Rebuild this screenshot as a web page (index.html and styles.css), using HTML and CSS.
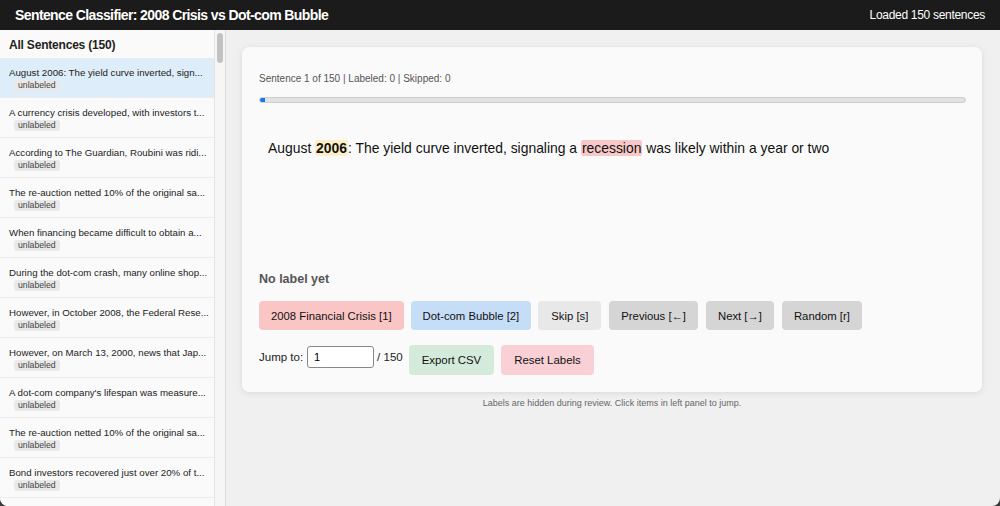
FILE: index.html
```html
<!DOCTYPE html>
<html lang="en">
<head>
    <meta charset="UTF-8">
    <meta name="viewport" content="width=device-width, initial-scale=1.0">
    <title>Sentence Classifier</title>
    <link rel="stylesheet" href="styles.css">
</head>
<body>
    <div class="app">
        <header class="topbar">
            <h1>Sentence Classifier: 2008 Crisis vs Dot-com Bubble</h1>
            <span id="status">Loaded 150 sentences</span>
        </header>

        <div class="layout">
            <aside class="sidebar">
                <div class="sidebar-scroll">
                    <div class="sidebar-title">All Sentences (150)</div>
                    <ul id="sentenceList" class="sentence-list"></ul>
                </div>
                <div class="scroll-track"><div class="scroll-thumb"></div></div>
            </aside>

            <main class="main">
                <div class="card">
                    <div class="stats">Sentence 1 of 150 | Labeled: 0 | Skipped: 0</div>
                    <div class="progress"><div class="progress-fill" style="width: 0.67%"></div></div>

                    <div class="sentence">
                        August <span class="hl-year">2006</span>: The yield curve inverted, signaling a <span class="hl-word">recession</span> was likely within a year or two
                    </div>

                    <div class="current-label">No label yet</div>

                    <div class="btn-row">
                        <button class="btn btn-crisis">2008 Financial Crisis [1]</button>
                        <button class="btn btn-dotcom">Dot-com Bubble [2]</button>
                        <button class="btn btn-skip">Skip [s]</button>
                        <button class="btn btn-nav">Previous [&larr;]</button>
                        <button class="btn btn-nav">Next [&rarr;]</button>
                        <button class="btn btn-nav">Random [r]</button>
                    </div>

                    <div class="btn-row tools">
                        <label for="jump">Jump to:</label>
                        <input type="text" id="jump" value="1">
                        <span class="total">/ 150</span>
                        <button class="btn btn-export">Export CSV</button>
                        <button class="btn btn-reset">Reset Labels</button>
                    </div>
                </div>
                <p class="hint">Labels are hidden during review. Click items in left panel to jump.</p>
            </main>
        </div>
    </div>

    <script src="app.js"></script>
</body>
</html>
```

FILE: styles.css
```css
* {
    box-sizing: border-box;
}

html, body {
    height: 100%;
}

body {
    margin: 0;
    font-family: "Liberation Sans", Arial, sans-serif;
    color: #222;
    background-color: #3a3a3a;
}

.app {
    height: 100%;
    display: flex;
    flex-direction: column;
    background-color: #f0f0f0;
    border-radius: 0 0 8px 8px;
    overflow: hidden;
}

.topbar {
    height: 30px;
    flex-shrink: 0;
    background-color: #1b1b1b;
    color: #fff;
    display: flex;
    align-items: center;
    justify-content: space-between;
    padding: 0 15px 0 15px;
}

.topbar h1 {
    margin: 0;
    font-size: 14px;
    letter-spacing: -0.6px;
    font-weight: bold;
}

#status {
    font-size: 12px;
    letter-spacing: -0.3px;
}

.layout {
    flex: 1;
    display: flex;
    min-height: 0;
}

.sidebar {
    width: 226px;
    flex-shrink: 0;
    display: flex;
    background-color: #fafafa;
    border-right: 1px solid #dcdcdc;
}

.sidebar-scroll {
    flex: 1;
    overflow-y: auto;
    scrollbar-width: none;
}

.sidebar-scroll::-webkit-scrollbar {
    display: none;
}

.scroll-track {
    width: 11px;
    flex-shrink: 0;
    background-color: #f6f6f6;
    border-left: 1px solid #e4e4e4;
    padding: 3px 2px 0 2px;
}

.scroll-thumb {
    height: 30px;
    background-color: #c2c2c2;
    border-radius: 3px;
}

.sidebar-title {
    font-size: 12px;
    letter-spacing: -0.2px;
    font-weight: bold;
    padding: 8px 9px 7px;
    height: 28px;
}

.sentence-list {
    list-style: none;
    margin: 0;
    padding: 0;
}

.sentence-list li {
    height: 40px;
    padding: 9px 9px 0;
    border-bottom: 1px solid #ececec;
    font-size: 9.7px;
    line-height: 12px;
    color: #222;
    cursor: pointer;
    white-space: nowrap;
    overflow: hidden;
}

.sentence-list li.active {
    background-color: #ddedf9;
}

.badge {
    display: block;
    width: fit-content;
    margin: 1px 0 0 5px;
    padding: 0 4px;
    height: 11px;
    line-height: 11px;
    font-size: 8.7px;
    color: #444;
    background-color: #e9e9e9;
    border-radius: 3px;
}

.main {
    flex: 1;
    padding: 17px 18px 0 16px;
}

.card {
    background-color: #fafafa;
    border-radius: 7px;
    box-shadow: 0 1px 6px rgba(0, 0, 0, 0.1);
    padding: 26px 16px 17px 17px;
    height: 345px;
}

.stats {
    font-size: 10px;
    color: #555;
}

.progress {
    margin-top: 13px;
    height: 6px;
    background-color: #e2e2e2;
    border: 1px solid #cfcfcf;
    border-radius: 3px;
    overflow: hidden;
}

.progress-fill {
    height: 100%;
    background-color: #1a73e8;
}

.sentence {
    font-size: 13.9px;
    color: #111;
    padding: 37px 9px 0;
    height: 169px;
}

.hl-year {
    font-weight: bold;
    background-color: #fcefc6;
    border-radius: 2px;
    padding: 0 1px;
}

.hl-word {
    background-color: #f8c7c7;
    border-radius: 2px;
    padding: 0 1px;
}

.current-label {
    font-size: 12.5px;
    font-weight: bold;
    color: #555;
}

.btn-row {
    display: flex;
    align-items: center;
    gap: 7px;
    margin-top: 15px;
}

.btn {
    font-family: "Liberation Sans", Arial, sans-serif;
    font-size: 11.3px;
    color: #111;
    border: none;
    border-radius: 4px;
    height: 29px;
    padding: 0 12px;
    cursor: pointer;
}

.btn-crisis {
    background-color: #f9c5c5;
}

.btn-dotcom {
    background-color: #c6ddf8;
}

.btn-skip {
    background-color: #e8e8e8;
    padding: 0 13px;
}

.btn-nav {
    background-color: #d5d5d5;
    margin-left: 1px;
}

.btn-export {
    background-color: #d4eada;
}

.btn-reset {
    background-color: #f8d0d6;
}

.tools {
    margin-top: 15px;
    gap: 0;
    font-size: 11.5px;
    color: #222;
}

.tools .btn {
    height: 30px;
    font-size: 11.4px;
    padding: 0 13px;
}

.tools .btn-export {
    margin-left: 6px;
}

.tools .btn-reset {
    margin-left: 7px;
}

#jump {
    width: 67px;
    height: 22px;
    margin: -7px 3px 0 4px;
    border: 1px solid #888;
    border-radius: 3px;
    padding: 0 6px;
    font-family: "Liberation Sans", Arial, sans-serif;
    font-size: 11px;
    background-color: #fff;
}

.tools .total,
.tools label {
    margin-top: -6px;
}

.hint {
    margin: 6px 0 0;
    text-align: center;
    font-size: 9px;
    color: #666;
}
```

FILE: app.js
```js
// short previews shown in the side panel
const previews = [
    "August 2006: The yield curve inverted, sign...",
    "A currency crisis developed, with investors t...",
    "According to The Guardian, Roubini was ridi...",
    "The re-auction netted 10% of the original sa...",
    "When financing became difficult to obtain a...",
    "During the dot-com crash, many online shop...",
    "However, in October 2008, the Federal Rese...",
    "However, on March 13, 2000, news that Jap...",
    "A dot-com company's lifespan was measure...",
    "The re-auction netted 10% of the original sa...",
    "Bond investors recovered just over 20% of t..."
];

const list = document.getElementById('sentenceList');

for (let i = 0; i < 150; i++) {
    const li = document.createElement('li');
    if (i === 0) li.classList.add('active');
    li.textContent = previews[i % previews.length];
    const badge = document.createElement('div');
    badge.className = 'badge';
    badge.textContent = 'unlabeled';
    li.appendChild(badge);
    list.appendChild(li);
}
```
